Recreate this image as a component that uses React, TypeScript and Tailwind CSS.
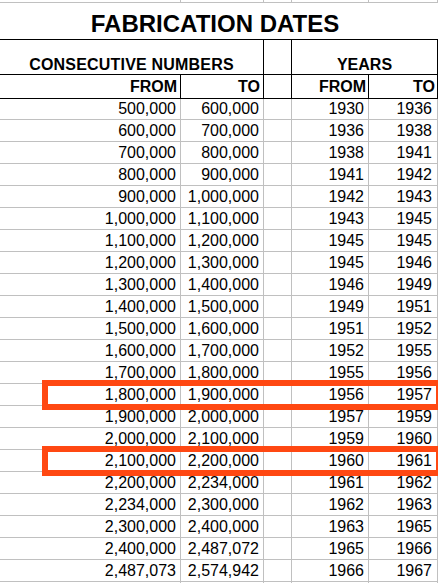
import React from 'react';

const rows: [string, string, string, string][] = [
  ['500,000', '600,000', '1930', '1936'],
  ['600,000', '700,000', '1936', '1938'],
  ['700,000', '800,000', '1938', '1941'],
  ['800,000', '900,000', '1941', '1942'],
  ['900,000', '1,000,000', '1942', '1943'],
  ['1,000,000', '1,100,000', '1943', '1945'],
  ['1,100,000', '1,200,000', '1945', '1945'],
  ['1,200,000', '1,300,000', '1945', '1946'],
  ['1,300,000', '1,400,000', '1946', '1949'],
  ['1,400,000', '1,500,000', '1949', '1951'],
  ['1,500,000', '1,600,000', '1951', '1952'],
  ['1,600,000', '1,700,000', '1952', '1955'],
  ['1,700,000', '1,800,000', '1955', '1956'],
  ['1,800,000', '1,900,000', '1956', '1957'],
  ['1,900,000', '2,000,000', '1957', '1959'],
  ['2,000,000', '2,100,000', '1959', '1960'],
  ['2,100,000', '2,200,000', '1960', '1961'],
  ['2,200,000', '2,234,000', '1961', '1962'],
  ['2,234,000', '2,300,000', '1962', '1963'],
  ['2,300,000', '2,400,000', '1963', '1965'],
  ['2,400,000', '2,487,072', '1965', '1966'],
  ['2,487,073', '2,574,942', '1966', '1967'],
];

// empty gray-ruled cells (top sliver and the cut-off row at the bottom)
const EmptyRow: React.FC<{ className: string }> = ({ className }) => (
  <div className={`flex ${className}`}>
    <div className="w-[181px] border-r border-[#c0c0c0]" />
    <div className="w-[83px] border-r border-[#c0c0c0]" />
    <div className="w-[28px] border-r border-[#c0c0c0]" />
    <div className="w-[77px] border-r border-[#c0c0c0]" />
    <div className="w-[69px] border-r border-[#c0c0c0]" />
  </div>
);

export default function App() {
  return (
    <div className="relative w-[438px] h-[583px] overflow-hidden bg-white text-black font-['Liberation_Sans',Arial,sans-serif] flex flex-col">
      <EmptyRow className="h-[3px] shrink-0 border-b border-[#c0c0c0]" />

      {/* Title */}
      <div className="h-[37px] shrink-0 border-b border-black flex items-end justify-center pb-[2px] pr-[8px]">
        <span className="text-[24px] leading-[27px] font-bold">FABRICATION DATES</span>
      </div>

      {/* Group headings */}
      <div className="flex h-[35px] shrink-0 border-b border-black text-[16px] leading-[18px] font-bold">
        <div className="w-[264px] border-r border-black flex items-end justify-center tracking-[0.2px]">CONSECUTIVE NUMBERS</div>
        <div className="w-[28px] border-r border-black" />
        <div className="w-[146px] border-r border-black flex items-end justify-center">YEARS</div>
      </div>

      {/* Column headings */}
      <div className="flex h-[24px] shrink-0 border-b border-black text-[16px] leading-[18px] font-bold">
        <div className="w-[181px] border-r border-black flex items-end justify-end pr-[3px] pb-[2px]">FROM</div>
        <div className="w-[83px] border-r border-black flex items-end justify-end pr-[3px] pb-[2px]">TO</div>
        <div className="w-[28px] border-r border-black" />
        <div className="w-[77px] border-r border-black flex items-end justify-end pr-[2px] pb-[2px]">FROM</div>
        <div className="w-[69px] border-r border-black flex items-end justify-end pr-[2px] pb-[2px]">TO</div>
      </div>

      {/* Data */}
      {rows.map((r, i) => (
        <div
          key={i}
          className={`flex shrink-0 border-b border-[#c0c0c0] text-[16px] leading-[18px] ${i === 0 ? 'h-[21px]' : 'h-[22px]'}`}
        >
          <div className="w-[181px] border-r border-[#c0c0c0] flex items-end justify-end pr-[4px] pb-[1px]">{r[0]}</div>
          <div className="w-[83px] border-r border-[#c0c0c0] flex items-end justify-end pr-[4px] pb-[1px]">{r[1]}</div>
          <div className="w-[28px] border-r border-[#c0c0c0]" />
          <div className="w-[77px] border-r border-[#c0c0c0] flex items-end justify-end pr-[4px] pb-[1px]">{r[2]}</div>
          <div className="w-[69px] border-r border-[#c0c0c0] flex items-end justify-end pr-[5px] pb-[1px]">{r[3]}</div>
        </div>
      ))}

      <EmptyRow className="flex-1" />

      {/* Highlight boxes */}
      <div className="absolute left-[42px] top-[380px] w-[400px] h-[30px] border-[6px] border-[#ff4812]" />
      <div className="absolute left-[42px] top-[446px] w-[400px] h-[30px] border-[6px] border-[#ff4812]" />
    </div>
  );
}
